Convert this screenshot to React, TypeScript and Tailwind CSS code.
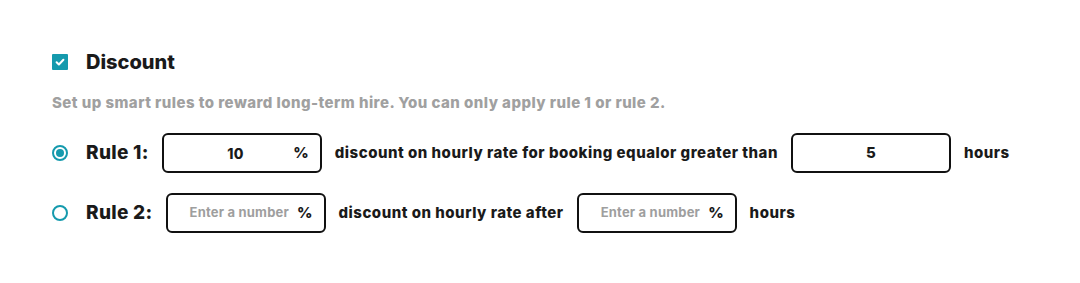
import React from 'react';

function Radio({ checked }: { checked: boolean }) {
  return (
    <span className="flex h-4 w-4 shrink-0 items-center justify-center rounded-full border-2 border-[#159aad]">
      {checked && <span className="h-2 w-2 rounded-full bg-[#159aad]" />}
    </span>
  );
}

function PercentInput({ value }: { value?: string }) {
  return (
    <div className="flex h-10 w-40 shrink-0 items-center rounded-md border-2 border-[#111] pl-[22px] pr-[11px]">
      <span
        className={
          value
            ? 'flex-1 whitespace-nowrap text-center text-[14px] font-extrabold tracking-[0.4px] text-[#1a1a1a]'
            : 'flex-1 whitespace-nowrap text-center text-[13px] font-bold tracking-[0.2px] text-[#9e9e9e]'
        }
      >
        {value ?? 'Enter a number'}
      </span>
      <span className="ml-2 text-[15px] font-extrabold text-[#1a1a1a]">%</span>
    </div>
  );
}

function NumberInput({ value }: { value?: string }) {
  return (
    <div className="flex h-10 w-40 shrink-0 items-center justify-center rounded-md border-2 border-[#111]">
      <span className="text-[15px] font-extrabold text-[#1a1a1a]">{value}</span>
    </div>
  );
}

export default function App() {
  return (
    <div
      className="h-[283px] w-[1080px] bg-white pl-[52px] pt-[50px] text-[#1a1a1a]"
      style={{ fontFamily: 'Inter, "Liberation Sans", sans-serif' }}
    >
      <div className="flex h-6 items-center gap-[18px]">
        <span className="flex h-4 w-4 items-center justify-center rounded-[1px] bg-[#159aad]">
          <svg width="12" height="12" viewBox="0 0 12 12" fill="none">
            <path d="M2.6 6.2l2.3 2.3 4.5-4.8" stroke="white" strokeWidth="2" strokeLinecap="round" strokeLinejoin="round" />
          </svg>
        </span>
        <span className="text-[20px] font-extrabold">Discount</span>
      </div>

      <p className="mt-[19px] h-5 text-[15px] font-extrabold leading-5 tracking-[0.45px] text-[#a0a0a0]">
        Set up smart rules to reward long-term hire. You can only apply rule 1 or rule 2.
      </p>

      <div className="mt-5 flex h-10 items-center">
        <Radio checked />
        <span className="ml-[18px] text-[19px] font-extrabold tracking-[0.3px]">Rule 1:</span>
        <div className="ml-[13px] flex items-center gap-[13px]">
          <PercentInput value="10" />
          <span className="text-[15px] font-extrabold tracking-[0.5px]">discount on hourly rate for booking equalor greater than</span>
          <NumberInput value="5" />
          <span className="text-[15px] font-extrabold tracking-[0.5px]">hours</span>
        </div>
      </div>

      <div className="mt-5 flex h-10 items-center">
        <Radio checked={false} />
        <span className="ml-[18px] text-[19px] font-extrabold tracking-[0.3px]">Rule 2:</span>
        <div className="ml-[13px] flex items-center gap-[13px]">
          <PercentInput />
          <span className="text-[15px] font-extrabold tracking-[0.5px]">discount on hourly rate after</span>
          <PercentInput />
          <span className="text-[15px] font-extrabold tracking-[0.5px]">hours</span>
        </div>
      </div>
    </div>
  );
}
